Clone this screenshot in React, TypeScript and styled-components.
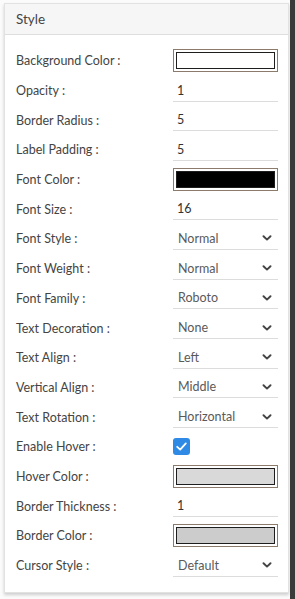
import React from "react";
import styled, { createGlobalStyle } from "styled-components";

const GlobalStyle = createGlobalStyle`
  html, body {
    margin: 0;
    padding: 0;
    background: #fff;
  }
  body {
    font-family: Lato, "Open Sans", sans-serif;
  }
`;

type Field =
  | { label: string; kind: "color"; value: string }
  | { label: string; kind: "text"; value: string }
  | { label: string; kind: "select"; value: string }
  | { label: string; kind: "check" };

const fields: Field[] = [
  { label: "Background Color :", kind: "color", value: "#ffffff" },
  { label: "Opacity :", kind: "text", value: "1" },
  { label: "Border Radius :", kind: "text", value: "5" },
  { label: "Label Padding :", kind: "text", value: "5" },
  { label: "Font Color :", kind: "color", value: "#000000" },
  { label: "Font Size :", kind: "text", value: "16" },
  { label: "Font Style :", kind: "select", value: "Normal" },
  { label: "Font Weight :", kind: "select", value: "Normal" },
  { label: "Font Family :", kind: "select", value: "Roboto" },
  { label: "Text Decoration :", kind: "select", value: "None" },
  { label: "Text Align :", kind: "select", value: "Left" },
  { label: "Vertical Align :", kind: "select", value: "Middle" },
  { label: "Text Rotation :", kind: "select", value: "Horizontal" },
  { label: "Enable Hover :", kind: "check" },
  { label: "Hover Color :", kind: "color", value: "#d9d9d9" },
  { label: "Border Thickness :", kind: "text", value: "1" },
  { label: "Border Color :", kind: "color", value: "#cccccc" },
  { label: "Cursor Style :", kind: "select", value: "Default" },
];

function Chevron() {
  return (
    <svg width="10" height="6" viewBox="0 0 10 6">
      <polyline
        points="1.5,1.2 5,4.6 8.5,1.2"
        fill="none"
        stroke="#444"
        strokeWidth="1.9"
        strokeLinecap="round"
        strokeLinejoin="round"
      />
    </svg>
  );
}

function Check() {
  return (
    <svg width="13" height="13" viewBox="0 0 13 13">
      <polyline
        points="2.2,6.8 5.2,9.6 10.8,3.4"
        fill="none"
        stroke="#fff"
        strokeWidth="1.8"
        strokeLinecap="round"
        strokeLinejoin="round"
      />
    </svg>
  );
}

function renderControl(f: Field) {
  switch (f.kind) {
    case "color":
      return (
        <Swatch>
          <SwatchFill $color={f.value} />
        </Swatch>
      );
    case "text":
      return <TextInput>{f.value}</TextInput>;
    case "select":
      return (
        <Select>
          <span>{f.value}</span>
          <Chevron />
        </Select>
      );
    case "check":
      return (
        <CheckBox>
          <Check />
        </CheckBox>
      );
  }
}

export default function App() {
  return (
    <>
      <GlobalStyle />
      <Page>
        <Main>
          <Panel>
            <Header>Style</Header>
            <Body>
              {fields.map((f) => (
                <Row key={f.label}>
                  <Label>{f.label}</Label>
                  <Control>{renderControl(f)}</Control>
                </Row>
              ))}
            </Body>
          </Panel>
        </Main>
        <ScrollBar />
      </Page>
    </>
  );
}

const Page = styled.div`
  display: flex;
  height: 599px;
  width: 295px;
  background: #fbfbfb;
`;

const Main = styled.div`
  flex: 1;
  padding: 3px 1px 0 4px;
`;

const ScrollBar = styled.div`
  width: 5px;
  background: #3a3a3a;
`;

const Panel = styled.section`
  background: #fff;
  border: 1px solid #e2e2e2;
  box-shadow: 0 2px 3px rgba(0, 0, 0, 0.18);
`;

const Header = styled.div`
  height: 30px;
  display: flex;
  align-items: center;
  padding-left: 11px;
  background: #f6f6f6;
  border-bottom: 1px solid #dedede;
  font-size: 13.5px;
  color: #444;
`;

const Body = styled.div`
  padding: 11px 10px 12px 0;
`;

const Row = styled.div`
  display: grid;
  grid-template-columns: 168px 105px;
  align-items: center;
  height: 29.7px;
`;

const Label = styled.div`
  padding-left: 11px;
  font-size: 12.5px;
  color: #444;
`;

const Control = styled.div`
  display: flex;
  align-items: center;
`;

const Swatch = styled.div`
  box-sizing: border-box;
  width: 105px;
  height: 23px;
  padding: 2px;
  border: 1px solid #8c7b6b;
  background: #fff;
`;

const SwatchFill = styled.div<{ $color: string }>`
  box-sizing: border-box;
  width: 100%;
  height: 100%;
  border: 1px solid #1e1e1e;
  background: ${(p) => p.$color};
`;

const TextInput = styled.div`
  box-sizing: border-box;
  width: 105px;
  height: 22px;
  display: flex;
  align-items: center;
  padding-left: 4px;
  border-bottom: 1px solid #dcdcdc;
  font-size: 12.5px;
  color: #333;
`;

const Select = styled(TextInput)`
  justify-content: space-between;
  padding: 0 6px 0 5px;
  color: #5a5a5a;
`;

const CheckBox = styled.div`
  width: 17px;
  height: 17px;
  border-radius: 3px;
  background: #2f8ae6;
  display: flex;
  align-items: center;
  justify-content: center;
`;
